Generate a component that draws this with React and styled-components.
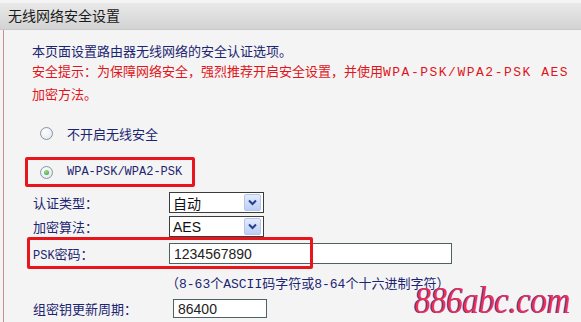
import styled, { createGlobalStyle } from 'styled-components';

const Global = createGlobalStyle`
  html, body { margin: 0; padding: 0; background: #f4f4f4; }
  body { font-family: "Noto Sans CJK SC", "Liberation Sans", sans-serif; }
`;

const NAVY = '#1c2571';
const RED = '#e0141b';

const Page = styled.div`
  position: relative;
  width: 581px;
  height: 322px;
  overflow: hidden;
  background: #f4f4f4;
  padding-top: 3px;
  box-sizing: border-box;
`;

const Header = styled.div`
  height: 26px;
  line-height: 24px;
  padding-left: 8px;
  background: linear-gradient(#e9e9e9, #d3d3d3);
  border-bottom: 1px solid #c9c9c9;
  color: #1a1a1a;
  font-size: 14px;
`;

const Body = styled.div`
  margin-left: 3px;
  border-left: 1px solid #c99090;
  height: 300px;
  padding-left: 28px;
  display: flex;
  flex-direction: column;
`;

const Intro = styled.div`
  margin-top: 11px;
  line-height: 20px;
  font-size: 13px;
  color: ${NAVY};
`;

const Warning = styled.div`
  margin-top: -2px;
  width: 540px;
  line-height: 23px;
  font-size: 13px;
  color: ${RED};
`;

const Mono = styled.span`
  font-family: "Liberation Mono", monospace;
  font-size: ${p => p.$size || 13}px;
  letter-spacing: ${p => p.$spacing || 0}px;
  line-height: 1;
`;

const Row = styled.div`
  position: relative;
  display: flex;
  align-items: center;
  height: ${p => p.$h}px;
  margin-top: ${p => p.$mt}px;
  font-size: 13px;
  color: ${NAVY};
`;

const RadioRow = styled(Row)`
  padding-left: 8px;
  gap: 14px;
`;

const Radio = styled.span`
  width: 11px;
  height: 11px;
  border-radius: 50%;
  border: 1px solid #8595a6;
  background: radial-gradient(circle at 40% 35%, #ffffff, #dde3ea);
  display: flex;
  align-items: center;
  justify-content: center;
  &::after {
    content: '';
    width: 5px;
    height: 5px;
    border-radius: 50%;
    background: ${p => (p.$checked ? 'radial-gradient(circle at 40% 35%, #9be08f, #2c9a2c)' : 'transparent')};
  }
`;

const Label = styled.span`
  width: 136px;
  flex: none;
  padding-left: 1px;
`;

const Select = styled.div`
  width: 93px;
  height: 19px;
  border: 1px solid #3c3c3c;
  background: #fff;
  display: flex;
  align-items: center;
  color: #111;
  font-size: 14px;
  box-sizing: content-box;
`;

const SelectValue = styled.span`
  flex: 1;
  padding-left: 3px;
  font-family: ${p => (p.$latin ? '"Liberation Sans", sans-serif' : 'inherit')};
`;

const Arrow = styled.span`
  width: 15px;
  height: 15px;
  margin-right: 2px;
  border: 1px solid #b4c6ea;
  border-radius: 2px;
  background: linear-gradient(#e3ebfb, #bccff4);
  display: flex;
  align-items: center;
  justify-content: center;
`;

const Input = styled.div`
  width: ${p => p.$w}px;
  height: ${p => p.$h}px;
  margin-left: ${p => p.$ml || 0}px;
  border: 1px solid #4d6262;
  background: #fff;
  display: flex;
  align-items: center;
  padding-left: 4px;
  color: #222;
  font-family: "Liberation Sans", sans-serif;
  font-size: 14px;
  box-sizing: border-box;
`;

const Hint = styled.span`
  margin-left: 134px;
  font-family: "Liberation Mono", "Noto Sans CJK SC", monospace;
  font-size: 13px;
  color: ${NAVY};
`;

const Annotation = styled.span`
  position: absolute;
  left: ${p => p.$x}px;
  top: ${p => p.$y}px;
  width: ${p => p.$w}px;
  height: ${p => p.$h}px;
  border: 3px solid #e8161c;
  border-radius: 2px;
  box-sizing: border-box;
  pointer-events: none;
`;

const Watermark = styled.div`
  position: absolute;
  right: 11px;
  bottom: 2px;
  line-height: 1;
  font-family: "Liberation Serif", serif;
  font-style: italic;
  font-size: 33px;
  color: #f03050;
  text-shadow: -1px 0 #2f4fc0;
  transform: scaleY(1.15);
  transform-origin: bottom right;
  letter-spacing: -0.5px;
`;

const Chevron = () => (
  <svg width="9" height="7" viewBox="0 0 9 7">
    <path d="M1 1.5 L4.5 5 L8 1.5" fill="none" stroke="#27408b" strokeWidth="2" />
  </svg>
);

const DropDown = ({ value, latin }) => (
  <Select>
    <SelectValue $latin={latin}>{value}</SelectValue>
    <Arrow><Chevron /></Arrow>
  </Select>
);

export default function App() {
  return (
    <Page>
      <Global />
      <Header>无线网络安全设置</Header>
      <Body>
        <Intro>本页面设置路由器无线网络的安全认证选项。</Intro>
        <Warning>
          安全提示：为保障网络安全，强烈推荐开启安全设置，并使用<Mono $spacing={1.5}>WPA-PSK/WPA2-PSK AES</Mono>加密方法。
        </Warning>

        <RadioRow $h={24} $mt={16}>
          <Radio />
          <span>不开启无线安全</span>
        </RadioRow>

        <RadioRow $h={24} $mt={15}>
          <Radio $checked />
          <Mono $size={12}>WPA-PSK/WPA2-PSK</Mono>
          <Annotation $x={-7} $y={-3} $w={170} $h={30} />
        </RadioRow>

        <Row $h={21} $mt={8}>
          <Label>认证类型：</Label>
          <DropDown value="自动" />
        </Row>

        <Row $h={21} $mt={3}>
          <Label>加密算法：</Label>
          <DropDown value="AES" latin />
        </Row>

        <Row $h={21} $mt={6}>
          <Label><Mono $size={12}>PSK</Mono>密码：</Label>
          <Input $w={283} $h={21}>1234567890</Input>
          <Annotation $x={-5} $y={-6} $w={286} $h={32} />
        </Row>

        <Row $h={18} $mt={9}>
          <Hint>（8-63个ASCII码字符或8-64个十六进制字符）</Hint>
        </Row>

        <Row $h={19} $mt={8}>
          <Label>组密钥更新周期：</Label>
          <Input $w={94} $h={19} $ml={4}>86400</Input>
        </Row>
      </Body>
      <Watermark>886abc.com</Watermark>
    </Page>
  );
}
